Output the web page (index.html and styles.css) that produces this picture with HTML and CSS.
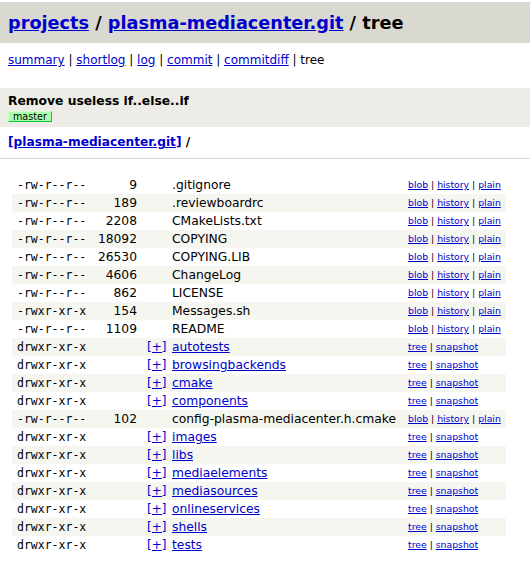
FILE: index.html
```html
<!DOCTYPE html>
<html>
<head>
<meta charset="utf-8">
<title>plasma-mediacenter.git tree</title>
<link rel="stylesheet" href="styles.css">
</head>
<body>
<div class="page-header">
  <a href="#">projects</a> / <a href="#">plasma-mediacenter.git</a> / tree
</div>
<div class="page-nav">
  <a href="#">summary</a> | <a href="#">shortlog</a> | <a href="#">log</a> | <a href="#">commit</a> | <a href="#">commitdiff</a> | tree
</div>
<div class="title">
  <div class="title-text">Remove useless if..else..if</div>
  <div class="head">master</div>
</div>
<div class="page-path"><a href="#">[plasma-mediacenter.git]</a> /</div>

<div class="tree">
  <div class="row"><span class="mode">-rw-r--r--</span><span class="size">9</span><span class="tog"></span><span class="name">.gitignore</span><span class="links"><a href="#">blob</a> | <a href="#">history</a> | <a href="#">plain</a></span></div>
  <div class="row dark"><span class="mode">-rw-r--r--</span><span class="size">189</span><span class="tog"></span><span class="name">.reviewboardrc</span><span class="links"><a href="#">blob</a> | <a href="#">history</a> | <a href="#">plain</a></span></div>
  <div class="row"><span class="mode">-rw-r--r--</span><span class="size">2208</span><span class="tog"></span><span class="name">CMakeLists.txt</span><span class="links"><a href="#">blob</a> | <a href="#">history</a> | <a href="#">plain</a></span></div>
  <div class="row dark"><span class="mode">-rw-r--r--</span><span class="size">18092</span><span class="tog"></span><span class="name">COPYING</span><span class="links"><a href="#">blob</a> | <a href="#">history</a> | <a href="#">plain</a></span></div>
  <div class="row"><span class="mode">-rw-r--r--</span><span class="size">26530</span><span class="tog"></span><span class="name">COPYING.LIB</span><span class="links"><a href="#">blob</a> | <a href="#">history</a> | <a href="#">plain</a></span></div>
  <div class="row dark"><span class="mode">-rw-r--r--</span><span class="size">4606</span><span class="tog"></span><span class="name">ChangeLog</span><span class="links"><a href="#">blob</a> | <a href="#">history</a> | <a href="#">plain</a></span></div>
  <div class="row"><span class="mode">-rw-r--r--</span><span class="size">862</span><span class="tog"></span><span class="name">LICENSE</span><span class="links"><a href="#">blob</a> | <a href="#">history</a> | <a href="#">plain</a></span></div>
  <div class="row dark"><span class="mode">-rwxr-xr-x</span><span class="size">154</span><span class="tog"></span><span class="name">Messages.sh</span><span class="links"><a href="#">blob</a> | <a href="#">history</a> | <a href="#">plain</a></span></div>
  <div class="row"><span class="mode">-rw-r--r--</span><span class="size">1109</span><span class="tog"></span><span class="name">README</span><span class="links"><a href="#">blob</a> | <a href="#">history</a> | <a href="#">plain</a></span></div>
  <div class="row dark"><span class="mode">drwxr-xr-x</span><span class="size"></span><span class="tog"><a href="#">[+]</a></span><span class="name"><a href="#">autotests</a></span><span class="links"><a href="#">tree</a> | <a href="#">snapshot</a></span></div>
  <div class="row"><span class="mode">drwxr-xr-x</span><span class="size"></span><span class="tog"><a href="#">[+]</a></span><span class="name"><a href="#">browsingbackends</a></span><span class="links"><a href="#">tree</a> | <a href="#">snapshot</a></span></div>
  <div class="row dark"><span class="mode">drwxr-xr-x</span><span class="size"></span><span class="tog"><a href="#">[+]</a></span><span class="name"><a href="#">cmake</a></span><span class="links"><a href="#">tree</a> | <a href="#">snapshot</a></span></div>
  <div class="row"><span class="mode">drwxr-xr-x</span><span class="size"></span><span class="tog"><a href="#">[+]</a></span><span class="name"><a href="#">components</a></span><span class="links"><a href="#">tree</a> | <a href="#">snapshot</a></span></div>
  <div class="row dark"><span class="mode">-rw-r--r--</span><span class="size">102</span><span class="tog"></span><span class="name">config-plasma-mediacenter.h.cmake</span><span class="links"><a href="#">blob</a> | <a href="#">history</a> | <a href="#">plain</a></span></div>
  <div class="row"><span class="mode">drwxr-xr-x</span><span class="size"></span><span class="tog"><a href="#">[+]</a></span><span class="name"><a href="#">images</a></span><span class="links"><a href="#">tree</a> | <a href="#">snapshot</a></span></div>
  <div class="row dark"><span class="mode">drwxr-xr-x</span><span class="size"></span><span class="tog"><a href="#">[+]</a></span><span class="name"><a href="#">libs</a></span><span class="links"><a href="#">tree</a> | <a href="#">snapshot</a></span></div>
  <div class="row"><span class="mode">drwxr-xr-x</span><span class="size"></span><span class="tog"><a href="#">[+]</a></span><span class="name"><a href="#">mediaelements</a></span><span class="links"><a href="#">tree</a> | <a href="#">snapshot</a></span></div>
  <div class="row dark"><span class="mode">drwxr-xr-x</span><span class="size"></span><span class="tog"><a href="#">[+]</a></span><span class="name"><a href="#">mediasources</a></span><span class="links"><a href="#">tree</a> | <a href="#">snapshot</a></span></div>
  <div class="row"><span class="mode">drwxr-xr-x</span><span class="size"></span><span class="tog"><a href="#">[+]</a></span><span class="name"><a href="#">onlineservices</a></span><span class="links"><a href="#">tree</a> | <a href="#">snapshot</a></span></div>
  <div class="row dark"><span class="mode">drwxr-xr-x</span><span class="size"></span><span class="tog"><a href="#">[+]</a></span><span class="name"><a href="#">shells</a></span><span class="links"><a href="#">tree</a> | <a href="#">snapshot</a></span></div>
  <div class="row"><span class="mode">drwxr-xr-x</span><span class="size"></span><span class="tog"><a href="#">[+]</a></span><span class="name"><a href="#">tests</a></span><span class="links"><a href="#">tree</a> | <a href="#">snapshot</a></span></div>
</div>
</body>
</html>
```

FILE: styles.css
```css
html, body {
  margin: 0;
  padding: 0;
  background: #ffffff;
}
body {
  padding-top: 2px;
  font-family: "DejaVu Sans", "Liberation Sans", sans-serif;
  font-size: 12px;
  color: #000000;
}
a {
  color: #0000cc;
  text-decoration: underline;
}
.page-header {
  height: 25px;
  padding: 8px;
  background: #d9d8d1;
  font-size: 17.7px;
  font-weight: bold;
  line-height: 26px;
}
.page-nav {
  padding: 10px 8px 21px;
  line-height: 14px;
}
.title {
  background: #edece6;
  padding: 6px 8px 5px;
  font-weight: bold;
  font-size: 12.3px;
}
.title-text {
  line-height: 14px;
}
.head {
  width: max-content;
  margin-top: 3px;
  padding: 0 4px;
  font-size: 9.6px;
  font-weight: normal;
  line-height: 9px;
  background: #aaffaa;
  border: 1px solid;
  border-color: #ccffcc #00cc33 #00cc33 #ccffcc;
}
.page-path {
  padding: 8px;
  font-weight: bold;
  font-size: 12.2px;
  line-height: 15px;
  border-bottom: 1px solid #d9d8d1;
}
.tree {
  padding: 17px 4px 8px 12px;
  width: 494px;
}
.row {
  display: grid;
  grid-template-columns: 76px 54px 26px 235px 103px;
  height: 18px;
  line-height: 14px;
}
.row.dark {
  background: #f6f6f0;
}
.row > span {
  padding: 2px 5px;
  white-space: nowrap;
}
.mode {
  font-family: "DejaVu Sans Mono", "Liberation Mono", monospace;
  font-size: 11.5px;
}
.size {
  text-align: right;
  font-size: 12.3px;
}
.row > .tog {
  padding-right: 0;
}
.row > .name {
  padding-left: 4px;
  font-size: 12.3px;
}
.links {
  font-size: 9.3px;
}
```
